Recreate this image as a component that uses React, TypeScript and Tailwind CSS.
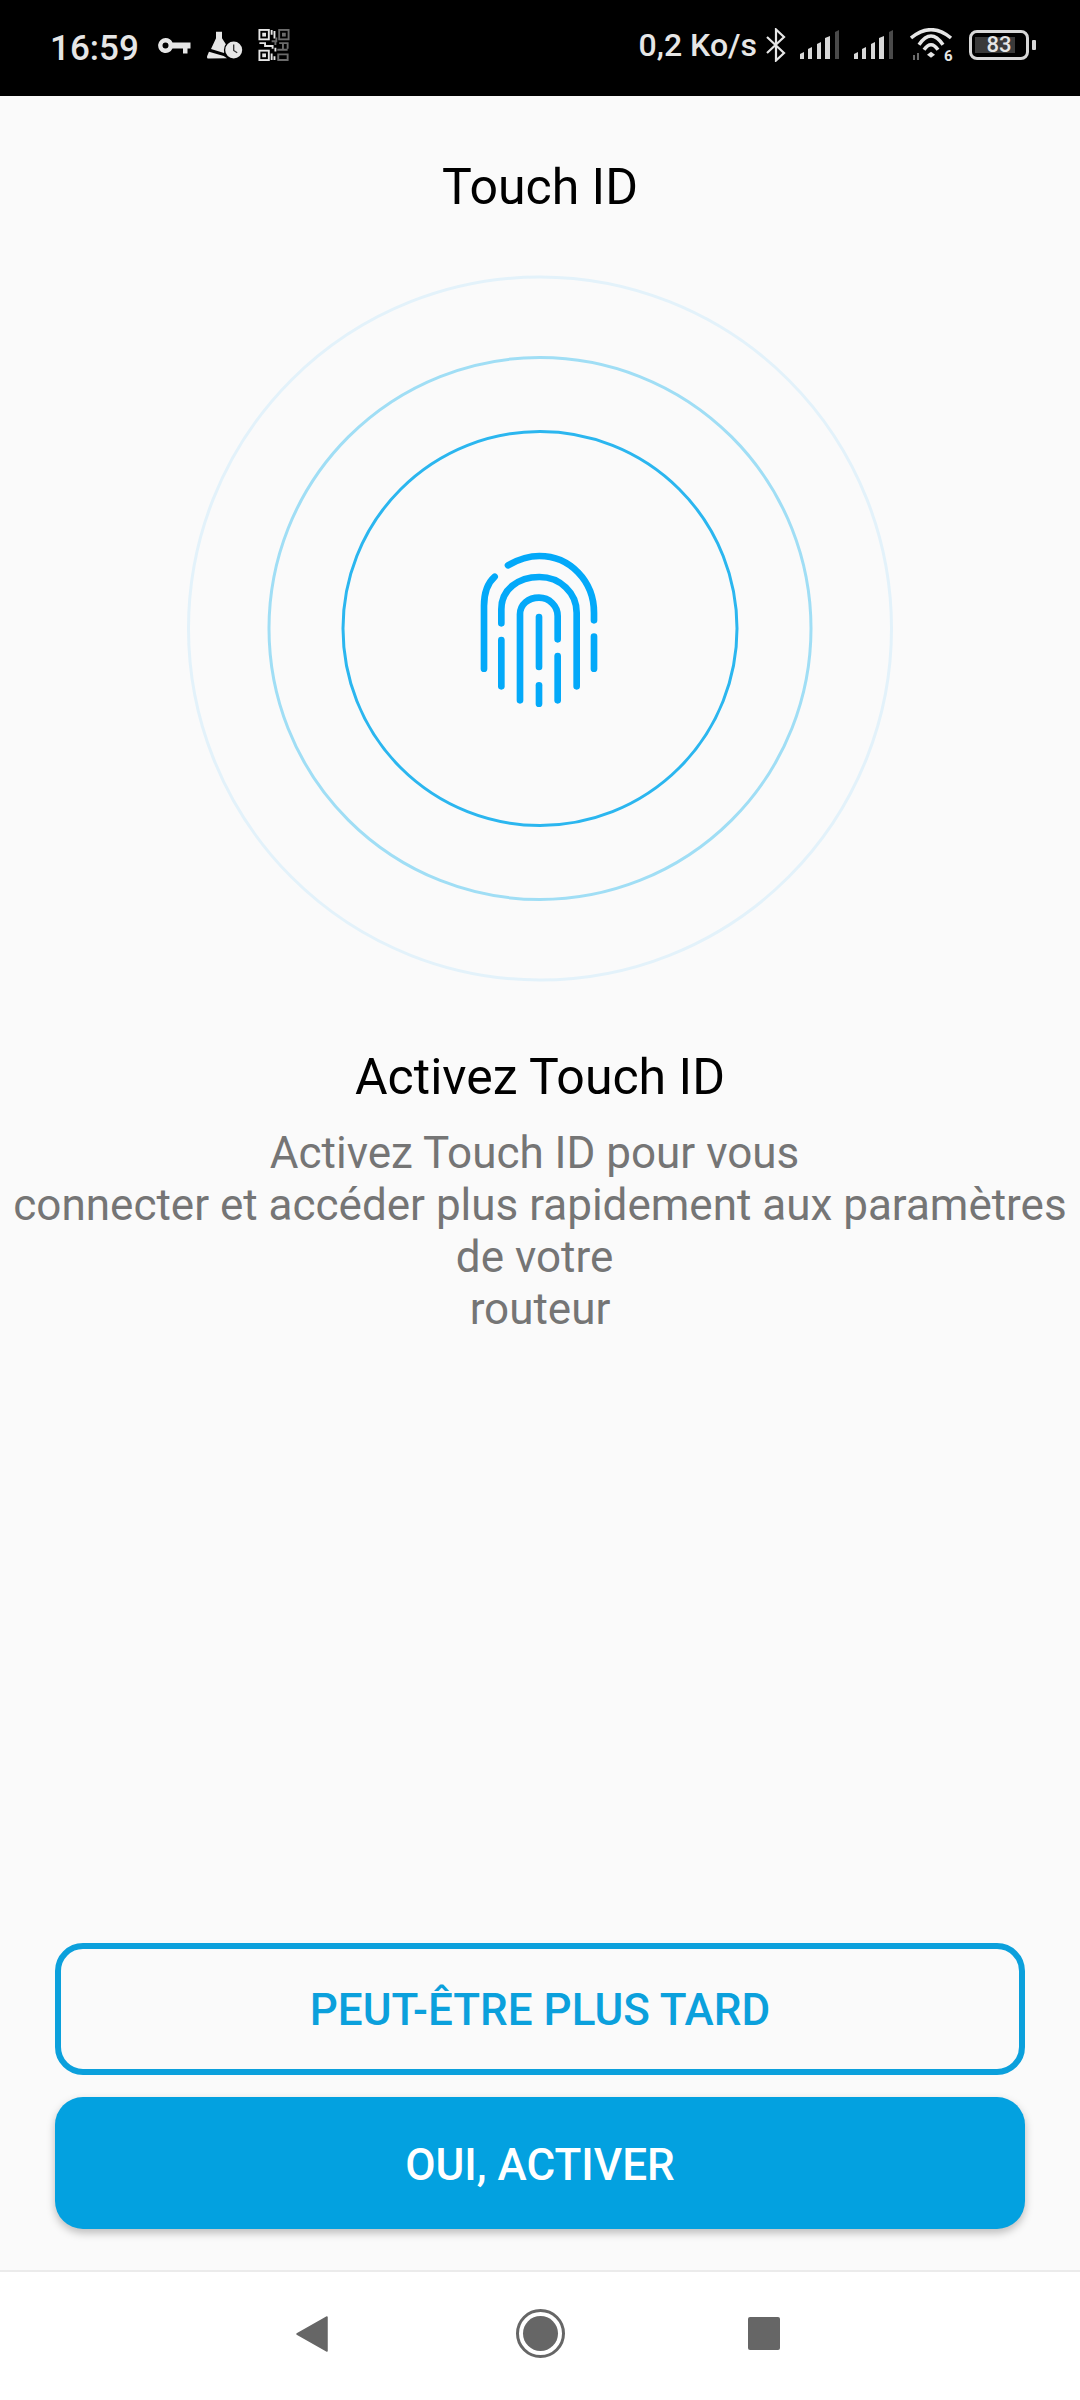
function StatusBar() {
  return (
    <div className="h-[96px] bg-black flex items-center justify-between text-[#e6e6e6] font-['Roboto',sans-serif]">
      <div className="flex items-center pl-[50px]">
        <span className="text-[35px] font-medium leading-none">16:59</span>
        {/* key */}
        <svg className="ml-[19px] mb-[4px]" width="33" height="18" viewBox="0 0 33 18">
          <path fillRule="evenodd" fill="#e6e6e6" d="M7.5 1a7.500 7.500 0 0 1 7 4.500H32.500v6H29.500v5H25v-5H14.500a7.500 7.500 0 1 1-7-10.500zM7.500 5.500a3 3 0 1 0 0 6 3 3 0 0 0 0-6z" />
        </svg>
        {/* flask + clock */}
        <svg className="ml-[15px] mb-[5px]" width="38" height="30" viewBox="0 0 38 30">
          <path fill="#e6e6e6" d="M10 .7h6v6.600L21 15l-3 7L5 18l5-10.700z" />
          <path fill="#e6e6e6" d="M3 20.700l14.700 4.300 3.300 2.300-18.500.300C1 27.600.800 26.500 1.200 25z" />
          <circle cx="27.700" cy="19" r="9.800" fill="#000" />
          <circle cx="27.700" cy="19" r="8.500" fill="#e6e6e6" />
          <path d="M27.700 13.500v6l3.500 2.300" stroke="#333" strokeWidth="1.300" fill="none" />
        </svg>
        {/* qr */}
        <svg className="ml-[14px] mb-[6px]" width="32" height="32" viewBox="0 0 33 34" fill="none">
          <g stroke="#e6e6e6" strokeWidth="2">
            <rect x="1" y="1" width="10" height="10" />
            <rect x="1" y="23" width="10" height="10" />
            <path d="M14 1v5M17 2v8M1 15h6v3h8v3M18 20v4M14 26v7M17 29v4" />
          </g>
          <g fill="#e6e6e6">
            <rect x="4" y="4" width="4" height="4" />
            <rect x="4" y="26" width="4" height="4" />
          </g>
          <g stroke="#6b6b6b" strokeWidth="2">
            <rect x="22" y="1" width="10" height="10" />
            <path d="M14 13h5v-4M22 15h9v6M26 15v7M20 22h11M21 27h10v6H21zM18 13v4" />
          </g>
          <rect x="25" y="4" width="4" height="4" fill="#6b6b6b" />
        </svg>
      </div>
      <div className="flex items-center pr-[44px] mb-[6px]">
        <span className="text-[32px] font-medium leading-none">0,2 Ko/s</span>
        {/* bluetooth */}
        <svg className="ml-[9px]" width="20" height="34" viewBox="0 0 20 34" fill="none">
          <path d="M1 9l17 16-8 7.500V1.500L18 9 1 25" stroke="#e6e6e6" strokeWidth="2.200" />
        </svg>
        <SignalBars className="ml-[14px]" />
        <SignalBars className="ml-[14px]" />
        {/* wifi */}
        <svg className="ml-[16px]" width="44" height="34" viewBox="0 0 44 34" fill="none">
          <path d="M1 10Q21 -6.600 41 10M9 16.700Q21 -.7 33 16.700M14 21.700Q21 11.700 28 21.700" stroke="#e6e6e6" strokeWidth="3.500" />
          <path d="M17 26.700l4-3 4 3-4 3z" fill="#e6e6e6" />
          <path d="M4 27v5M8 25v7" stroke="#6b6b6b" strokeWidth="2" />
          <text x="34" y="33" fontSize="15" fontWeight="700" fill="#e6e6e6" fontFamily="Roboto, sans-serif">6</text>
        </svg>
        {/* battery */}
        <div className="relative ml-[15px] w-[60px] h-[30px] rounded-[8px] border-[3.5px] border-[#d8d8d8] flex items-center pl-[3px]">
          <div className="w-[40px] h-[16px] bg-[#3a3a3a]" />
          <span className="absolute inset-0 flex items-center justify-center text-[22px] font-medium leading-none text-[#e6e6e6]">83</span>
        </div>
        <div className="ml-[3px] w-[4px] h-[10px] rounded-[1px] bg-[#d8d8d8]" />
      </div>
    </div>
  )
}

function SignalBars({ className }: { className?: string }) {
  return (
    <svg className={className} width="40" height="30" viewBox="0 0 40 30">
      <path fill="#d8d8d8" d="M0 29v-5l4-2v7zM8 29V19l4-2v12zM17 29V14l4-2v17zM25 29V8l5-2v23z" />
      <path fill="#4a4a4a" d="M35 29V2l4-2v29z" />
    </svg>
  )
}

function Fingerprint() {
  return (
    <svg width="180" height="190" viewBox="0 0 540 570" fill="none" stroke="#03a9f9" strokeWidth="20" strokeLinecap="round">
      <path d="M134 137Q102 165 102 225V413" />
      <path d="M174 103C205 85 235 75 268 75C360 75 432 150 432 245V268" />
      <path d="M432 317V413" />
      <path d="M154 277V235C154 175 205 138 268 138C330 138 380 185 380 245V466" />
      <path d="M154 327V466" />
      <path d="M210 508V250C210 220 235 200 267 200C298 200 323 225 323 255V325" />
      <path d="M323 375V508" />
      <path d="M267 258V408" />
      <path d="M267 463V518" />
    </svg>
  )
}

function Rings() {
  return (
    <div className="relative mt-[56px] w-[708px] h-[711px] pb-[5px] flex items-center justify-center">
      <svg className="absolute inset-0" width="708" height="711" viewBox="0 0 708 711" fill="none">
        <circle cx="354" cy="355.500" r="351.500" stroke="#e3f2fa" strokeWidth="3" />
        <circle cx="354" cy="355.500" r="271" stroke="#a0def5" strokeWidth="3" />
        <circle cx="354" cy="355.500" r="197" stroke="#2bb6ef" strokeWidth="3" />
      </svg>
      <div className="relative flex">
        <Fingerprint />
      </div>
    </div>
  )
}

export default function App() {
  return (
    <div className="w-[1080px] h-[2400px] flex flex-col bg-[#fafafa] font-['Roboto',sans-serif]">
      <StatusBar />

      <div className="flex-1 flex flex-col items-center">
        <div className="mt-[61px] text-[50px] leading-[60px] text-black">Touch ID</div>
        <Rings />
        <div className="mt-[63px] text-[50px] leading-[60px] text-black">Activez Touch ID</div>
        <div className="mt-[20px] text-center text-[44px] leading-[52px] text-[#757575] whitespace-pre">
          {'Activez Touch ID pour vous \nconnecter et accéder plus rapidement aux paramètres\nde votre \nrouteur'}
        </div>

        <div className="mt-auto w-full px-[55px] pb-[41px] flex flex-col gap-[22px]">
          <button className="h-[132px] pt-[2px] rounded-[28px] border-[6px] border-[#0ba0dc] text-[44px] font-medium text-[#0ba0dc]">
            PEUT-ÊTRE PLUS TARD
          </button>
          <button className="h-[132px] pt-[3px] rounded-[28px] bg-[#03a1e0] text-[44px] font-medium text-white shadow-[0_4px_8px_rgba(0,0,0,0.25)]">
            OUI, ACTIVER
          </button>
        </div>
      </div>

      <div className="h-[130px] bg-white border-t-2 border-[#ebebeb] flex items-center justify-center pb-[5px] pr-[4px]">
        <svg width="32" height="36" viewBox="0 0 32 36" className="mr-[188px]">
          <path fill="#666666" d="M31 1v34L1 18z" stroke="#666666" strokeWidth="1.500" strokeLinejoin="round" />
        </svg>
        <div className="w-[49px] h-[49px] rounded-full border-[3px] border-[#666666] flex items-center justify-center">
          <div className="w-[35px] h-[35px] rounded-full bg-[#666666]" />
        </div>
        <div className="ml-[183px] w-[32px] h-[33px] rounded-[2px] bg-[#666666]" />
      </div>
    </div>
  )
}
